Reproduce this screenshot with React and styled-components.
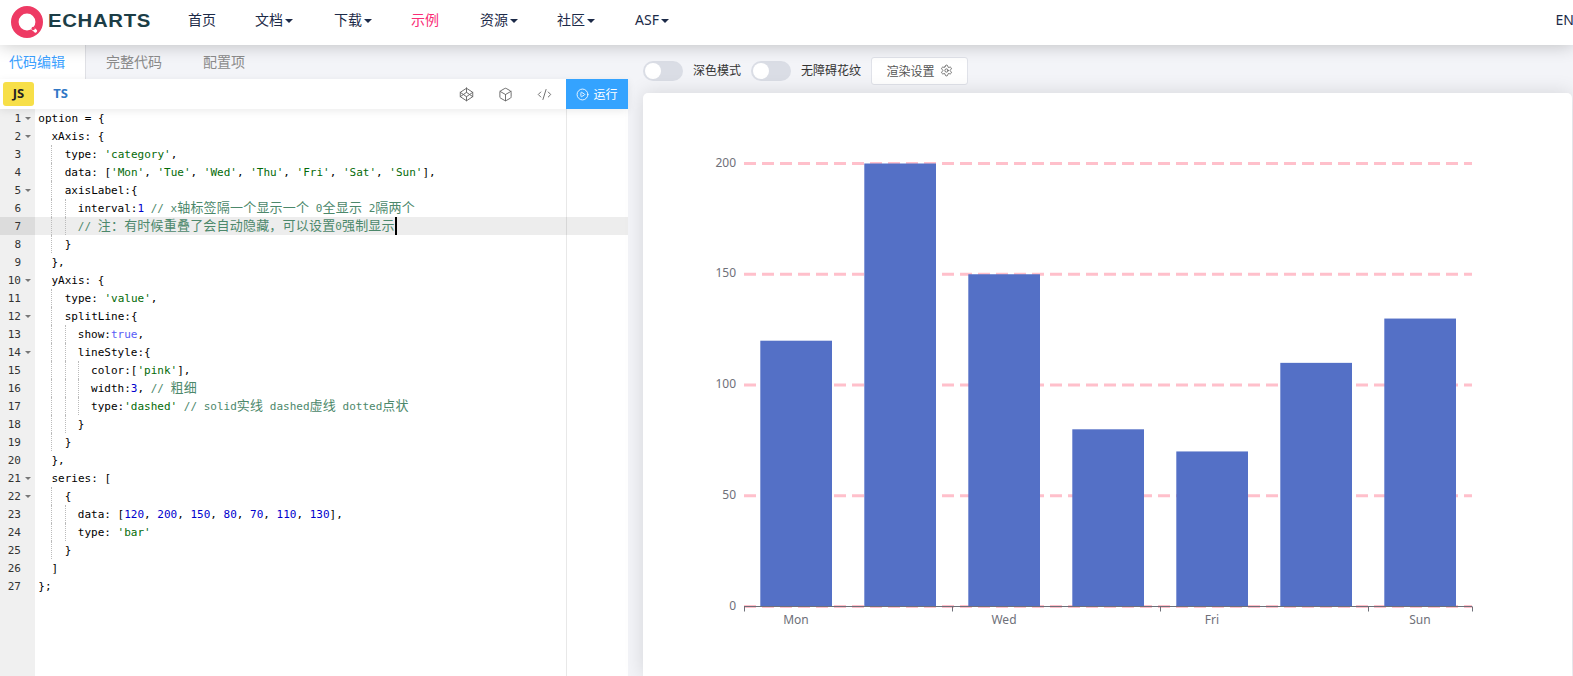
import React from 'react';
import styled, { createGlobalStyle } from 'styled-components';
import { Codepen, Box, CodeXml, CirclePlay, Settings } from 'lucide-react';

const UI_FONT = `"Noto Sans", "Noto Sans CJK SC", sans-serif`;
const CODE_FONT = `"DejaVu Sans Mono", "Noto Sans CJK SC", monospace`;

const Global = createGlobalStyle`
  html, body { margin: 0; padding: 0; height: 100%; overflow: hidden; background: #fff; }
  #root { height: 100%; }
  * { box-sizing: border-box; }
`;

const Page = styled.div`
  display: flex;
  flex-direction: column;
  height: 100vh;
  overflow: hidden;
  font-family: ${UI_FONT};
`;

/* ---------- header ---------- */
const Header = styled.header`
  position: relative;
  z-index: 3;
  flex: 0 0 45px;
  display: flex;
  align-items: center;
  background: #fff;
  box-shadow: 0 0 18px rgba(0, 0, 0, 0.24);
  padding-left: 11px;
`;
const Logo = styled.div`
  flex: 0 0 177px;
  display: flex;
  align-items: center;
  gap: 5px;
  margin-top: -2px;
`;
const LogoWord = styled.span`
  font: bold 18.5px "Liberation Sans", sans-serif;
  color: #1c3d46;
  letter-spacing: 0.6px;
  line-height: 1;
  transform: scaleX(1.1);
  transform-origin: left center;
`;
const NavItem = styled.a`
  flex: 0 0 ${(p) => p.$w}px;
  font-size: 14px;
  line-height: 20px;
  color: ${(p) => (p.$active ? '#f92d76' : '#1c2a48')};
  display: flex;
  align-items: center;
  margin-top: -6px;
`;
const Caret = styled.i`
  width: 0;
  height: 0;
  margin-left: 2px;
  margin-top: 2px;
  border-left: 4px solid transparent;
  border-right: 4px solid transparent;
  border-top: 4px solid #1c2a48;
`;
const Lang = styled.a`
  margin-left: auto;
  margin-right: -1px;
  margin-top: -6px;
  font-size: 14px;
  color: #1c2a48;
`;

/* ---------- main ---------- */
const Main = styled.div`
  flex: 1;
  display: flex;
  min-height: 0;
`;
const Left = styled.section`
  flex: 0 0 628px;
  display: flex;
  flex-direction: column;
`;
const Tabs = styled.div`
  flex: 0 0 34px;
  display: flex;
  background: #f3f4f8;
`;
const Tab = styled.div`
  flex: 0 0 ${(p) => p.$w}px;
  padding-left: ${(p) => p.$pad}px;
  font-size: 14px;
  line-height: 34px;
  color: ${(p) => (p.$active ? '#3ba1ff' : '#8b8b8b')};
  background: ${(p) => (p.$active ? '#fff' : 'transparent')};
  border-right: ${(p) => (p.$active ? '1px solid #dfe0e5' : '0')};
`;
const Toolbar = styled.div`
  position: relative;
  z-index: 2;
  flex: 0 0 30px;
  display: flex;
  align-items: center;
  background: #fff;
  box-shadow: 0 2px 8px rgba(0, 0, 0, 0.08);
  padding-left: 3px;
`;
const LangTab = styled.div`
  flex: 0 0 31px;
  height: 24px;
  border-radius: 3px;
  font-size: 13px;
  font-weight: 700;
  line-height: 22px;
  text-align: center;
  background: ${(p) => (p.$on ? '#f7df48' : 'transparent')};
  color: ${(p) => (p.$on ? '#222' : '#3178c6')};
  margin-right: ${(p) => (p.$on ? '11px' : '0')};
`;
const ToolIcons = styled.div`
  margin-left: auto;
  display: flex;
  align-items: center;
  gap: 24px;
  padding-right: 14px;
  color: #666;
`;
const RunButton = styled.button`
  flex: 0 0 62px;
  height: 30px;
  border: 0;
  padding: 0;
  display: flex;
  align-items: center;
  justify-content: center;
  gap: 4px;
  background: #34a3ff;
  color: #fff;
  font: 12px ${UI_FONT};
`;

/* ---------- editor ---------- */
const Editor = styled.div`
  flex: 1;
  display: flex;
  min-height: 0;
  background: #fff;
  font: 11px/20px ${CODE_FONT};
  color: #000;
`;
const Gutter = styled.div`
  flex: 0 0 35px;
  background: #f0f0f0;
  color: #333;
`;
const GutterRow = styled.div`
  height: 18px;
  line-height: 20px;
  text-align: right;
  padding-right: 14px;
  position: relative;
  background: ${(p) => (p.$active ? '#dcdcdc' : 'transparent')};
`;
const Fold = styled.i`
  position: absolute;
  right: 4px;
  top: 8px;
  width: 0;
  height: 0;
  border-left: 3px solid transparent;
  border-right: 3px solid transparent;
  border-top: 3px solid #777;
`;
const CodeArea = styled.div`
  flex: 1;
  position: relative;
`;
const PrintMargin = styled.div`
  position: absolute;
  left: 531px;
  top: 0;
  bottom: 0;
  width: 1px;
  background: #e8e8e8;
`;
const Line = styled.div`
  position: relative;
  height: 18px;
  white-space: pre;
  padding-left: 3.3px;
  background: ${(p) => (p.$active ? 'rgba(0,0,0,0.07)' : 'transparent')};
`;
const Guide = styled.span`
  display: inline-block;
  width: 13.2px;
  height: 18px;
  vertical-align: top;
  border-left: 1px dotted ${(p) => (p.$show ? '#bbb' : 'transparent')};
`;
const TOKEN = {
  plain: '#000',
  str: '#036a07',
  num: '#0000cd',
  kw: '#585cf6',
  com: '#4c886b',
};
const Tok = styled.span`
  color: ${(p) => TOKEN[p.$t]};
`;
const Cjk = styled.span`
  font-size: 13px;
  line-height: 0;
  letter-spacing: 0.2px;
  font-family: "Noto Sans CJK SC", sans-serif;
`;
const Cursor = styled.i`
  display: inline-block;
  width: 2px;
  height: 18px;
  vertical-align: top;
  background: #000;
`;

/* ---------- right ---------- */
const Right = styled.section`
  flex: 1;
  min-width: 0;
  display: flex;
  flex-direction: column;
  background: #f3f4f8;
  padding: 0 1px 0 15px;
`;
const Controls = styled.div`
  flex: 0 0 48px;
  display: flex;
  align-items: center;
  padding-top: 3px;
`;
const Switch = styled.div`
  flex: 0 0 40px;
  height: 20px;
  border-radius: 10px;
  background: #dadde5;
  padding: 2px;
  margin-right: 10px;
`;
const Knob = styled.div`
  width: 16px;
  height: 16px;
  border-radius: 50%;
  background: #fff;
`;
const SwitchLabel = styled.span`
  font-size: 12px;
  line-height: 20px;
  color: #333;
  margin-right: ${(p) => p.$mr}px;
`;
const RenderButton = styled.button`
  width: 97px;
  height: 28px;
  background: #fff;
  border: 1px solid #e0e2e9;
  border-radius: 3px;
  display: flex;
  align-items: center;
  justify-content: center;
  gap: 5px;
  color: #555;
  font: 12px ${UI_FONT};
`;
const Card = styled.div`
  flex: 1;
  min-height: 0;
  background: #fff;
  border-radius: 5px 5px 0 0;
  box-shadow: 0 0 20px rgba(0, 0, 0, 0.13);
  overflow: hidden;
`;
const ChartSvg = styled.svg`
  display: block;
  width: 100%;
  height: 100%;
`;
const AxisText = styled.text`
  font: 12px ${UI_FONT};
  fill: #6e7079;
`;

/* ---------- data ---------- */
const S = (t) => ['str', t];
const N = (t) => ['num', t];
const P = (t) => ['plain', t];
const C = (t) => ['com', t];

const CODE = [
  [0, [P('option = {')]],
  [1, [P('xAxis: {')]],
  [2, [P('type: '), S("'category'"), P(',')]],
  [2, [P('data: ['), S("'Mon'"), P(', '), S("'Tue'"), P(', '), S("'Wed'"), P(', '), S("'Thu'"), P(', '), S("'Fri'"), P(', '), S("'Sat'"), P(', '), S("'Sun'"), P('],')]],
  [2, [P('axisLabel:{')]],
  [3, [P('interval:'), N('1'), P(' '), C('// x轴标签隔一个显示一个 0全显示 2隔两个')]],
  [3, [C('// 注：有时候重叠了会自动隐藏，可以设置0强制显示')]],
  [2, [P('}')]],
  [1, [P('},')]],
  [1, [P('yAxis: {')]],
  [2, [P('type: '), S("'value'"), P(',')]],
  [2, [P('splitLine:{')]],
  [3, [P('show:'), ['kw', 'true'], P(',')]],
  [3, [P('lineStyle:{')]],
  [4, [P('color:['), S("'pink'"), P('],')]],
  [4, [P('width:'), N('3'), P(', '), C('// 粗细')]],
  [4, [P('type:'), S("'dashed'"), P(' '), C('// solid实线 dashed虚线 dotted点状')]],
  [3, [P('}')]],
  [2, [P('}')]],
  [1, [P('},')]],
  [1, [P('series: [')]],
  [2, [P('{')]],
  [3, [P('data: ['), N('120'), P(', '), N('200'), P(', '), N('150'), P(', '), N('80'), P(', '), N('70'), P(', '), N('110'), P(', '), N('130'), P('],')]],
  [3, [P('type: '), S("'bar'")]],
  [2, [P('}')]],
  [1, [P(']')]],
  [0, [P('};')]],
];
const FOLDS = new Set([1, 2, 5, 10, 12, 14, 21, 22]);
const ACTIVE = 7;

const withCjk = (text) =>
  text.split(/([\u3000-\u9fff\uff00-\uffef]+)/).map((part, i) =>
    i % 2 ? <Cjk key={i}>{part}</Cjk> : part
  );

const NAV = [
  { label: '首页', w: 67 },
  { label: '文档', w: 79, caret: true },
  { label: '下载', w: 77, caret: true },
  { label: '示例', w: 69, active: true },
  { label: '资源', w: 77, caret: true },
  { label: '社区', w: 78, caret: true },
  { label: 'ASF', w: 60, caret: true },
];

const BARS = [120, 200, 150, 80, 70, 110, 130];
const ZERO = 606.5;
const UNIT = 2.215;
const AXIS_L = 744;
const AXIS_R = 1472;

function Chart() {
  return (
    <ChartSvg viewBox="643 93 929 583" preserveAspectRatio="xMinYMin slice">
      {[0, 50, 100, 150, 200].map((v) => {
        const y = ZERO - v * UNIT;
        return (
          <g key={v}>
            <line x1={AXIS_L} x2={AXIS_R} y1={y} y2={y} stroke="#ffc0cb" strokeWidth="3" strokeDasharray="12 6" />
            <AxisText x="736" y={y + 3} textAnchor="end">{v}</AxisText>
          </g>
        );
      })}
      {BARS.map((v, i) => (
        <rect key={i} x={760.3 + 104 * i} y={ZERO - v * UNIT} width="71.7" height={v * UNIT} fill="#5470c6" />
      ))}
      <line x1={AXIS_L} x2={AXIS_R} y1={ZERO} y2={ZERO} stroke="#6e7079" />
      {[744, 952, 1160, 1368, 1472].map((x) => (
        <line key={x} x1={x + 0.5} x2={x + 0.5} y1={ZERO} y2={ZERO + 5} stroke="#6e7079" />
      ))}
      {[['Mon', 796], ['Wed', 1004], ['Fri', 1212], ['Sun', 1420]].map(([t, x]) => (
        <AxisText key={t} x={x} y="623.5" textAnchor="middle">{t}</AxisText>
      ))}
    </ChartSvg>
  );
}

function LogoMark() {
  return (
    <svg width="32" height="32" viewBox="0 0 32 32">
      <circle cx="16" cy="16" r="12.2" fill="none" stroke="#ee3a64" strokeWidth="7.6" />
      <path d="M19.5 20.5 L24.5 25" stroke="#fff" strokeWidth="3.2" strokeLinecap="round" />
      <circle cx="22.2" cy="22.5" r="1.7" fill="#ee3a64" />
    </svg>
  );
}

export default function App() {
  return (
    <Page>
      <Global />
      <Header>
        <Logo>
          <LogoMark />
          <LogoWord>ECHARTS</LogoWord>
        </Logo>
        {NAV.map((n) => (
          <NavItem key={n.label} $w={n.w} $active={n.active}>
            {n.label}
            {n.caret && <Caret />}
          </NavItem>
        ))}
        <Lang>EN</Lang>
      </Header>
      <Main>
        <Left>
          <Tabs>
            <Tab $w={86} $pad={9} $active>代码编辑</Tab>
            <Tab $w={97} $pad={20}>完整代码</Tab>
            <Tab $w={90} $pad={20}>配置项</Tab>
          </Tabs>
          <Toolbar>
            <LangTab $on>JS</LangTab>
            <LangTab>TS</LangTab>
            <ToolIcons>
              <Codepen size={15} strokeWidth={1.5} />
              <Box size={15} strokeWidth={1.5} />
              <CodeXml size={15} strokeWidth={1.5} />
            </ToolIcons>
            <RunButton>
              <CirclePlay size={13} strokeWidth={1.6} />
              运行
            </RunButton>
          </Toolbar>
          <Editor>
            <Gutter>
              {CODE.map((_, i) => (
                <GutterRow key={i} $active={i + 1 === ACTIVE}>
                  {i + 1}
                  {FOLDS.has(i + 1) && <Fold />}
                </GutterRow>
              ))}
            </Gutter>
            <CodeArea>
              <PrintMargin />
              {CODE.map(([indent, tokens], i) => (
                <Line key={i} $active={i + 1 === ACTIVE}>
                  {Array.from({ length: indent }, (_, g) => (
                    <Guide key={g} $show={g > 0} />
                  ))}
                  {tokens.map(([t, text], k) => (
                    <Tok key={k} $t={t}>{withCjk(text)}</Tok>
                  ))}
                  {i + 1 === ACTIVE && <Cursor />}
                </Line>
              ))}
            </CodeArea>
          </Editor>
        </Left>
        <Right>
          <Controls>
            <Switch><Knob /></Switch>
            <SwitchLabel $mr={10}>深色模式</SwitchLabel>
            <Switch><Knob /></Switch>
            <SwitchLabel $mr={10}>无障碍花纹</SwitchLabel>
            <RenderButton>
              渲染设置
              <Settings size={13} strokeWidth={1.5} />
            </RenderButton>
          </Controls>
          <Card>
            <Chart />
          </Card>
        </Right>
      </Main>
    </Page>
  );
}
